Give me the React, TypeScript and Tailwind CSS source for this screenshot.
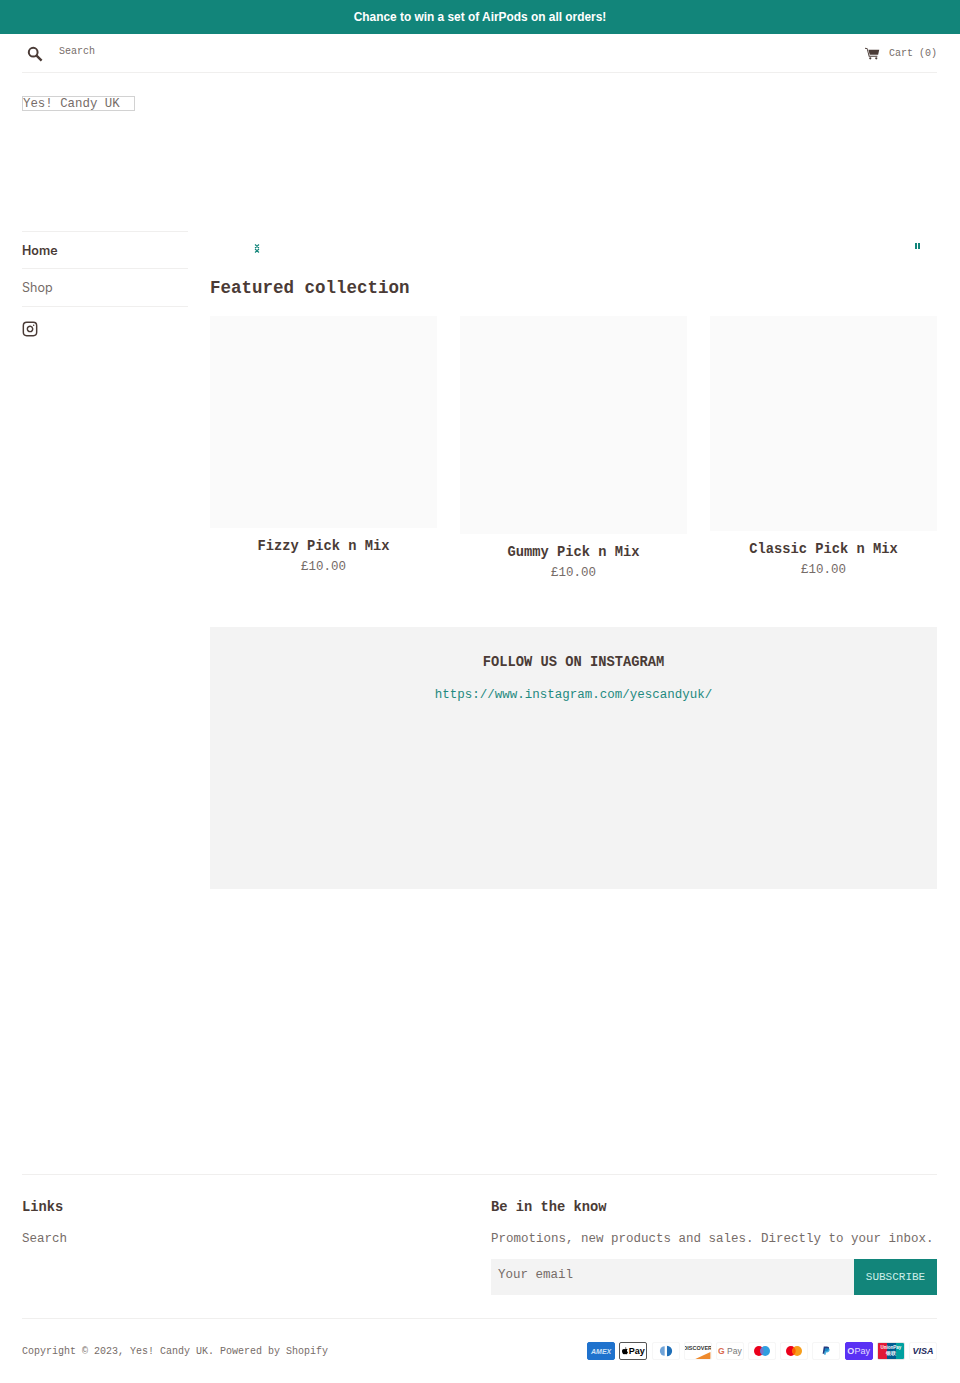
import { Instagram } from 'lucide-react';

const mono = "font-['Liberation_Mono',monospace]";

const products = [
  { name: 'Fizzy Pick n Mix', imageClass: 'h-[212px]' },
  { name: 'Gummy Pick n Mix', imageClass: 'h-[218px]' },
  { name: 'Classic Pick n Mix', imageClass: 'h-[215px]' },
];

function SearchIcon() {
  return (
    <svg viewBox="0 0 16 16" fill="none" className="w-[16px] h-[16px] stroke-[#4a3b36]">
      <circle cx="6.2" cy="6.2" r="4.4" strokeWidth="2" />
      <path d="M9.6 9.6l5 5" strokeWidth="2.4" />
    </svg>
  );
}

function CartIcon() {
  return (
    <svg viewBox="0 0 16 13" className="w-[15px] h-[13px] fill-[#4a3b36]">
      <path d="M0 .4l2.6.5 2.2 8h8.4v1H4L1.9 1.8 0 1.4z" />
      <path d="M3.6 2.6h11.6l-1.2 5.2H5z" />
      <circle cx="5.6" cy="11.6" r="1.2" />
      <circle cx="12" cy="11.6" r="1.2" />
    </svg>
  );
}

function PayCard({ children, bg = 'bg-white', border = 'border-[#f6f6f6]' }: { children: React.ReactNode; bg?: string; border?: string }) {
  return (
    <div className={`w-[28px] h-[18px] rounded-[2px] border flex items-center justify-center overflow-hidden ${bg} ${border}`}>
      {children}
    </div>
  );
}

function PaymentIcons() {
  return (
    <div className="flex gap-[4.2px] font-['Liberation_Sans',sans-serif]">
      <PayCard bg="bg-[#1f72cd]" border="border-[#1f72cd]">
        <span className="text-[7px] font-bold italic text-[#cfe2f7] leading-none">AMEX</span>
      </PayCard>
      <PayCard border="border-[#555]">
        <svg viewBox="0 0 8 10" className="w-[6px] h-[8px] fill-black mr-[1px]">
          <path d="M5.6 0c.1.9-.7 1.9-1.7 1.9C3.800.9 4.700.1 5.600 0zM4 2.500c.5 0 1-.4 1.800-.4.600 0 1.300.3 1.700.9-1.400.9-1.200 2.800.4 3.500-.4 1.100-1.200 2.800-2.200 2.800-.6 0-.9-.4-1.600-.4s-1 .4-1.600.4C1.300 9.300 0 7.100 0 5.300 0 3.300 1.200 2.200 2.400 2.200c.7 0 1.200.3 1.600.3z" />
        </svg>
        <span className="text-[9px] font-bold text-black leading-none">Pay</span>
      </PayCard>
      <PayCard>
        <svg viewBox="0 0 24 16" className="w-[22px] h-[14px]">
          <path d="M10.500 2.500a5.500 5.500 0 0 0 0 11z" fill="#6fa3d8" />
          <path d="M13 2a6 6 0 0 1 0 12z" fill="#1f6fb8" />
          <rect x="11" y="2" width="2" height="12" fill="#fff" />
        </svg>
      </PayCard>
      <PayCard>
        <div className="relative w-full h-full flex items-start justify-center">
          <span className="text-[5.5px] font-bold text-[#333] leading-[11px] whitespace-nowrap">DISCOVER</span>
          <svg viewBox="0 0 28 18" className="absolute inset-0 w-full h-full">
            <path d="M11 18 L28 10 V18 Z" fill="#ee8a2d" />
          </svg>
        </div>
      </PayCard>
      <PayCard>
        <span className="text-[8.5px] text-[#777] leading-none">
          <span className="text-[#d9694f] font-bold">G</span> Pay
        </span>
      </PayCard>
      <PayCard>
        <svg viewBox="0 0 28 18" className="w-full h-full">
          <circle cx="10.500" cy="9" r="5.500" fill="#eb001b" />
          <circle cx="17.500" cy="9" r="5.500" fill="#2f9fe0" />
          <path d="M14 4.800a5.500 5.500 0 0 1 0 8.400a5.500 5.500 0 0 1 0-8.400z" fill="#7375cf" />
        </svg>
      </PayCard>
      <PayCard>
        <svg viewBox="0 0 28 18" className="w-full h-full">
          <circle cx="10.500" cy="9" r="5.500" fill="#eb001b" />
          <circle cx="17.500" cy="9" r="5.500" fill="#f79e1b" />
          <path d="M14 4.800a5.500 5.500 0 0 1 0 8.400a5.500 5.500 0 0 1 0-8.400z" fill="#ff5f00" />
        </svg>
      </PayCard>
      <PayCard>
        <svg viewBox="0 0 28 18" className="w-full h-full">
          <path d="M11.500 4h3.600c1.800 0 2.600 1 2.300 2.500-.4 1.800-1.600 2.700-3.400 2.700h-1.200l-.5 3h-2.100z" fill="#253b80" />
          <path d="M13 6h3.200c1.500 0 2.100.9 1.800 2.200-.3 1.600-1.400 2.400-3 2.400H14l-.4 2.600h-1.800z" fill="#179bd7" opacity=".8" />
        </svg>
      </PayCard>
      <PayCard bg="bg-[#5a31f4]" border="border-[#5a31f4]">
        <span className="text-[9px] text-[#e4deff] leading-none">
          <span className="font-bold">O</span>Pay
        </span>
      </PayCard>
      <PayCard border="border-[#e5e5e5]">
        <div className="relative w-full h-full bg-[#00a0a0] flex items-center justify-center">
          <div className="absolute inset-y-0 left-0 w-[10px] bg-[#e21836]" />
          <div className="absolute inset-y-0 left-[9px] w-[9px] bg-[#005b8f]" />
          <span className="relative text-[4.5px] font-bold text-white text-center leading-[6px] whitespace-nowrap">UnionPay<br />银联</span>
        </div>
      </PayCard>
      <PayCard>
        <span className="text-[9px] font-bold italic text-[#232a5c] leading-none">VISA</span>
      </PayCard>
    </div>
  );
}

export default function App() {
  return (
    <div className={`min-h-[1383px] bg-white text-[#766c68] ${mono}`}>
      {/* Announcement */}
      <div className="h-[34px] pt-[1px] bg-[#12857a] flex items-center justify-center">
        <p className="font-['Liberation_Sans',sans-serif] text-[11.9px] font-bold text-white">Chance to win a set of AirPods on all orders!</p>
      </div>

      <div className="pl-[22px] pr-[23px]">
        {/* Header */}
        <header className="h-[39px] border-b border-[#f0efee] flex items-center justify-between">
          <div className="flex items-center">
            <span className="ml-[5px] mt-[1px]"><SearchIcon /></span>
            <span className="ml-[16px] mb-[4px] text-[10px]">Search</span>
          </div>
          <div className="flex items-center gap-[9px] text-[10px]">
            <CartIcon />
            <span>Cart (0)</span>
          </div>
        </header>

        {/* Logo, shown as broken image alt */}
        <div className="h-[158px] pt-[23px]">
          <div className="w-[113px] h-[15px] border border-[#d2d2d2] text-[12.4px] leading-[15px] whitespace-nowrap">Yes! Candy UK</div>
        </div>

        <div className="flex gap-[22px]">
          {/* Sidebar */}
          <aside className="w-[166px] shrink-0 font-['Inter',sans-serif] text-[12.5px]">
            <div className="h-[38px] border-y border-[#f0efee] flex items-center pt-[2px] font-semibold text-[#4a3b36]">Home</div>
            <div className="h-[39px] -mt-px border-b border-[#f0efee] flex items-center pt-[2px]">Shop</div>
            <Instagram className="w-[16px] h-[16px] mt-[14px] text-[#4a3b36]" strokeWidth={2.2} />
          </aside>

          {/* Main */}
          <main className="flex-1">
            <div className="mt-[4px] h-[24px] flex justify-between items-center pl-[44px] pr-[17px]">
              <svg viewBox="0 0 6 9" className="w-[6px] h-[9px] mt-[2px] stroke-[#12857a]" strokeWidth="1.1" fill="none">
                <path d="M1 .5l4 3.500M5 .5L1 4M1 5l4 3.500M5 5L1 8.500" />
              </svg>
              <div className="flex gap-[1.5px] -mt-[2px]">
                <span className="w-[2px] h-[6px] bg-[#12857a]" />
                <span className="w-[2px] h-[6px] bg-[#12857a]" />
              </div>
            </div>

            <h2 className="mt-[17px] text-[17.5px] leading-[24px] font-bold text-[#4a3b36]">Featured collection</h2>

            <div className="mt-[16px] grid grid-cols-3 gap-[23px] items-start">
              {products.map((p) => (
                <div key={p.name} className="text-center">
                  <div className={`bg-[#fafafa] ${p.imageClass}`} />
                  <h3 className="mt-[10px] text-[13.75px] leading-[18px] font-bold text-[#4a3b36]">{p.name}</h3>
                  <p className="mt-[2px] text-[12.5px] leading-[18px]">£10.00</p>
                </div>
              ))}
            </div>

            <section className="mt-[45px] h-[262px] bg-[#f3f3f3] pt-[26px] text-center">
              <h3 className="text-[13.75px] leading-[20px] font-bold text-[#4a3b36]">FOLLOW US ON INSTAGRAM</h3>
              <a className="block mt-[12px] text-[12.5px] leading-[20px] text-[#1f8a7f]">https://www.instagram.com/yescandyuk/</a>
            </section>
          </main>
        </div>

        {/* Footer */}
        <footer className="mt-[285px] border-t border-[#f0efee]">
          <div className="h-[144px] border-b border-[#f0efee] pt-[23px] flex">
            <div className="w-[469px]">
              <h4 className="text-[13.75px] leading-[20px] font-bold text-[#4a3b36]">Links</h4>
              <p className="mt-[11px] text-[12.5px] leading-[20px]">Search</p>
            </div>
            <div className="flex-1">
              <h4 className="text-[13.75px] leading-[20px] font-bold text-[#4a3b36]">Be in the know</h4>
              <p className="mt-[11px] text-[12.5px] leading-[20px] whitespace-nowrap">Promotions, new products and sales. Directly to your inbox.</p>
              <div className="mt-[10px] h-[36px] flex">
                <div className="flex-1 bg-[#f3f3f3] pl-[7px] pb-[3px] flex items-center text-[12.5px]">Your email</div>
                <button className="w-[83px] bg-[#12857a] text-[#cdeee8] text-[11px]">SUBSCRIBE</button>
              </div>
            </div>
          </div>
          <div className="mt-[23px] flex items-center justify-between">
            <p className="text-[10px]">Copyright © 2023, Yes! Candy UK. Powered by Shopify</p>
            <PaymentIcons />
          </div>
        </footer>
      </div>
    </div>
  );
}
